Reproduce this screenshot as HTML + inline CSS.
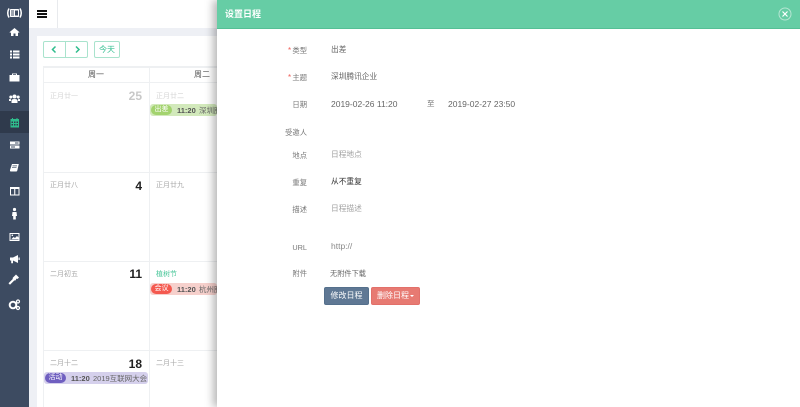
<!DOCTYPE html>
<html><head><meta charset="utf-8">
<style>
*{box-sizing:border-box}
html,body{margin:0;padding:0;width:800px;height:407px;overflow:hidden;background:#eef0f5;font-family:"Liberation Sans","Noto Sans CJK SC",sans-serif}
#wrap{position:absolute;left:0;top:0;width:800px;height:407px;overflow:hidden;filter:blur(.35px)}
.a{position:absolute;white-space:nowrap;line-height:1}
#side{position:absolute;left:0;top:0;width:29px;height:407px;background:#3d4b61}
#active{position:absolute;left:0;top:111px;width:29px;height:22px;background:#2f3a4c}
#top{position:absolute;left:29px;top:0;width:188px;height:28px;background:#fff}
#card{position:absolute;left:37px;top:36px;width:180px;height:371px;background:#fff}
.l{position:absolute;background:#eef0f2}
.lunar{font-size:7px;color:#a8a8a8}
.num{font-size:12px;font-weight:bold;color:#222;text-align:right}
.ev{position:absolute;height:12px;border-radius:3px;overflow:hidden}
.pill{position:absolute;left:1px;top:1px;width:21px;height:10px;border-radius:5px;color:#fff;font-size:7px;line-height:10px;text-align:center}
.et{position:absolute;top:2.500px;font-size:7.500px;line-height:1;color:#444;white-space:nowrap}
.tm{left:27px;font-weight:bold;color:#555}
.ti{left:49px;color:#666}
#drawer{position:absolute;left:217px;top:0;width:583px;height:407px;background:#fff;box-shadow:-4px 0 8px rgba(0,0,0,.28)}
#head{position:absolute;left:0;top:0;width:583px;height:29px;background:#66cda5;border-bottom:1px solid #55bf95}
.lb{position:absolute;font-size:7.300px;line-height:1;color:#777;white-space:nowrap;text-align:right;right:493px}
.v{position:absolute;font-size:7.700px;line-height:1;color:#666;white-space:nowrap;left:114px}
.ph{color:#a0a0a0}
.btn{position:absolute;top:287px;height:18px;border-radius:2px;color:#fff;font-size:8px;text-align:center}
</style></head>
<body>
<div id="wrap">
<div id="side">
<div id="active"></div>
<svg width="29" height="320" viewBox="0 0 29 320" style="position:absolute;left:0;top:0">
<g fill="#fff">
<path d="M9 8.500Q6.500 13 9 17.500M20 8.500Q22.500 13 20 17.500" stroke="#fff" stroke-width="1.500" fill="none"/>
<rect x="10" y="9" width="9" height="8" rx=".8"/>
<path d="M11 10.500h3v1h-3zM11 12.500h3v1h-3zM11 14.500h3v1h-3zM15 10.500h3v5h-3z" fill="#3d4b61"/>
<path d="M14.500 28l-5 4.200.7.700.8-.7v3.800h2.500v-2.500h2v2.500H18v-3.800l.8.700.7-.7z"/>
<path d="M10 50.500h2v2h-2zM13 50.500h6.500v2H13zM10 53.500h2v2h-2zM13 53.500h6.500v2H13zM10 56.500h2v2h-2zM13 56.500h6.500v2H13z"/>
<path d="M12 75v-1.500h5V75h2.500v6.500h-10V75zm1 0h3v-.7h-3z" fill-rule="evenodd"/>
<circle cx="14.500" cy="96.500" r="2"/><circle cx="10.800" cy="97" r="1.500"/><circle cx="18.200" cy="97" r="1.500"/>
<path d="M11.500 103v-2.500q0-1.500 3-1.500t3 1.500v2.500zM9 101v-1.500q0-.8 1.800-.8l.3 2.300zM20 101v-1.500q0-.8-1.800-.8l-.3 2.300z"/>
<path d="M10.500 119h8.500v8.500h-8.500z" fill="#2fbd8d"/>
<path d="M12 118h1v2h-1zM16.500 118h1v2h-1z" fill="#2fbd8d"/>
<path d="M11.500 121.500h1.500v1.500h-1.500zM14 121.500h1.500v1.500H14zM16.500 121.500H18v1.500h-1.500zM11.500 124h1.500v1.500h-1.500zM14 124h1.500v1.500H14zM16.500 124H18v1.500h-1.500z" fill="#2f3a4c"/>
<path d="M10 141.500h9.500v3H10zM10 145.500h9.500v3H10z"/>
<path d="M15 142.500h3.500v1H15zM11 146.500h4v1h-4z" fill="#3d4b61"/>
<path d="M12 164h6.800l-1.500 6.500q-.3 1-1 1H10.500q-.8-.3-.5-1.500z"/>
<path d="M12.500 165.500h4.500v.7h-4.500zM12 167.200h4.500v.7H12z" fill="#3d4b61"/>
<path d="M10 187h9.500v8.500H10zm1 2v5.500h3.200V189zm4.300 0v5.500h3.200V189z" fill-rule="evenodd"/>
<circle cx="14.500" cy="209.500" r="1.600"/>
<path d="M12.500 212h4l.5 4h-1.200v3.500h-2.600V216H12z"/>
<path d="M9.500 233h10v8h-10zm1 1v6h8v-6z" fill-rule="evenodd"/>
<path d="M11 239.500l2.500-2.500 1.500 1 2-2 1.500 1.500v2z"/><circle cx="12.300" cy="235.300" r=".8"/>
<path d="M10 257.500h3l5-2.500v8l-5-2.500v2.700h-1.800v-2.700H10z"/><rect x="18.500" y="257.500" width="1.200" height="2.500"/>
<path d="M13 277.500l3-3 3 3-1.500 1.500-.7-.5-1 1 .2.300-1 1-.5-.5-4.500 4.500-1.500-1.500 4.500-4.500-.5-.5z"/>
<circle cx="13" cy="305" r="3.300" fill="none" stroke="#fff" stroke-width="2"/>
<circle cx="18" cy="301.500" r="1.500" fill="none" stroke="#fff" stroke-width="1.200"/>
<circle cx="18" cy="308" r="1.500" fill="none" stroke="#fff" stroke-width="1.200"/>
</g></svg>
</div>
<div id="top">
<div style="position:absolute;left:28px;top:0;width:1px;height:28px;background:#e8eaed"></div>
<div style="position:absolute;left:8px;top:10px;width:10px;height:2px;background:#111"></div>
<div style="position:absolute;left:8px;top:13px;width:10px;height:2px;background:#111"></div>
<div style="position:absolute;left:8px;top:16px;width:10px;height:2px;background:#111"></div>
</div>
<div id="card"></div>
<div style="position:absolute;left:43px;top:41px;width:45px;height:17px;border:1px solid #a9e3cd;border-radius:2px;background:#fff">
<div style="position:absolute;left:21px;top:0;width:1px;height:15px;background:#a9e3cd"></div>
<svg width="43" height="15" style="position:absolute;left:0;top:0"><path d="M11.500 4.500L8.500 7.500l3 3M32 4.500l3 3-3 3" fill="none" stroke="#2fbd8d" stroke-width="1.500"/></svg>
</div>
<div class="a" style="left:94px;top:41px;width:26px;height:17px;border:1px solid #a9e3cd;border-radius:2px;background:#fff;color:#3cc195;font-size:8px;line-height:15px;text-align:center">今天</div>
<div class="l" style="left:43px;top:66px;width:174px;height:2px"></div>
<div class="l" style="left:43px;top:82px;width:174px;height:1px"></div>
<div class="l" style="left:43px;top:66px;width:1px;height:341px"></div>
<div class="l" style="left:149px;top:66px;width:1px;height:341px"></div>
<div class="l" style="left:43px;top:172px;width:174px;height:1px"></div>
<div class="l" style="left:43px;top:261px;width:174px;height:1px"></div>
<div class="l" style="left:43px;top:350px;width:174px;height:1px"></div>
<div class="a" style="left:88px;top:71px;font-size:8px;color:#555">周一</div>
<div class="a" style="left:194px;top:71px;font-size:8px;color:#555">周二</div>
<div class="a lunar" style="left:50px;top:92.500px;color:#d6d6d6">正月廿一</div>
<div class="a num" style="left:120px;top:90px;width:22px;color:#c8c8c8">25</div>
<div class="a lunar" style="left:156px;top:92.500px;color:#d6d6d6">正月廿二</div>
<div class="ev" style="left:150px;top:104px;width:67px;background:#d2e9bb"><div class="pill" style="background:#a3d36e">出差</div><div class="et tm">11:20</div><div class="et ti">深圳腾讯企业</div></div>
<div class="a lunar" style="left:50px;top:181.500px">正月廿八</div>
<div class="a num" style="left:120px;top:180px;width:22px">4</div>
<div class="a lunar" style="left:156px;top:181.500px">正月廿九</div>
<div class="a lunar" style="left:50px;top:270.500px">二月初五</div>
<div class="a num" style="left:120px;top:268px;width:22px">11</div>
<div class="a lunar" style="left:156px;top:270.500px;color:#4cc79b">植树节</div>
<div class="ev" style="left:150px;top:283px;width:67px;background:#f6d0cc"><div class="pill" style="background:#f4594f">会议</div><div class="et tm">11:20</div><div class="et ti">杭州腾讯企业</div></div>
<div class="a lunar" style="left:50px;top:359.500px">二月十二</div>
<div class="a num" style="left:120px;top:358px;width:22px">18</div>
<div class="a lunar" style="left:156px;top:359.500px">二月十三</div>
<div class="ev" style="left:44px;top:372px;width:104px;background:#d5d0ec"><div class="pill" style="background:#6f5fc0">活动</div><div class="et tm">11:20</div><div class="et ti">2019互联网大会</div></div>
<div id="drawer">
<div id="head">
<div class="a" style="left:8px;top:10px;font-size:9px;font-weight:bold;color:#fff">设置日程</div>
<svg width="14" height="14" style="position:absolute;left:561px;top:7px"><circle cx="7" cy="7" r="6" fill="none" stroke="#b6e6d3" stroke-width="1"/><path d="M4.500 4.500l5 5M9.500 4.500l-5 5" stroke="#fff" stroke-width="1.200"/></svg>
</div>
<div class="a" style="left:71px;top:47px;font-size:8px;color:#f0605a">*</div>
<div class="a" style="left:71px;top:74px;font-size:8px;color:#f0605a">*</div>
<div class="lb" style="top:46.500px">类型</div><div class="v" style="top:46px">出差</div>
<div class="lb" style="top:73.500px">主题</div><div class="v" style="top:73px">深圳腾讯企业</div>
<div class="lb" style="top:100.500px">日期</div><div class="v" style="top:100px;font-size:8.500px">2019-02-26 11:20</div>
<div class="a" style="left:210px;top:100px;font-size:7.500px;color:#777">至</div>
<div class="v" style="top:100px;left:231px;font-size:8.500px">2019-02-27 23:50</div>
<div class="lb" style="top:128.500px">受邀人</div>
<div class="lb" style="top:151.500px">地点</div><div class="v ph" style="top:151px">日程地点</div>
<div class="lb" style="top:178.500px">重复</div><div class="v" style="top:178px;color:#333">从不重复</div>
<div class="lb" style="top:205.500px">描述</div><div class="v ph" style="top:204.500px">日程描述</div>
<div class="lb" style="top:243.500px">URL</div><div class="v" style="top:242px;color:#888;font-size:8.500px">http://</div>
<div class="lb" style="top:269.500px">附件</div><div class="v" style="top:269.500px;left:113px;font-size:7.200px">无附件下载</div>
<div class="btn" style="left:107px;width:45px;background:#5f7894;border:1px solid #55708c;line-height:16px">修改日程</div>
<div class="btn" style="left:154px;width:49px;background:#e77a72;border:1px solid #e2706a;line-height:16px">删除日程<span style="display:inline-block;width:0;height:0;border:2.500px solid transparent;border-top-color:#fff;border-bottom:0;vertical-align:middle;margin-left:1px"></span></div>
</div>
</div>
</body></html>
